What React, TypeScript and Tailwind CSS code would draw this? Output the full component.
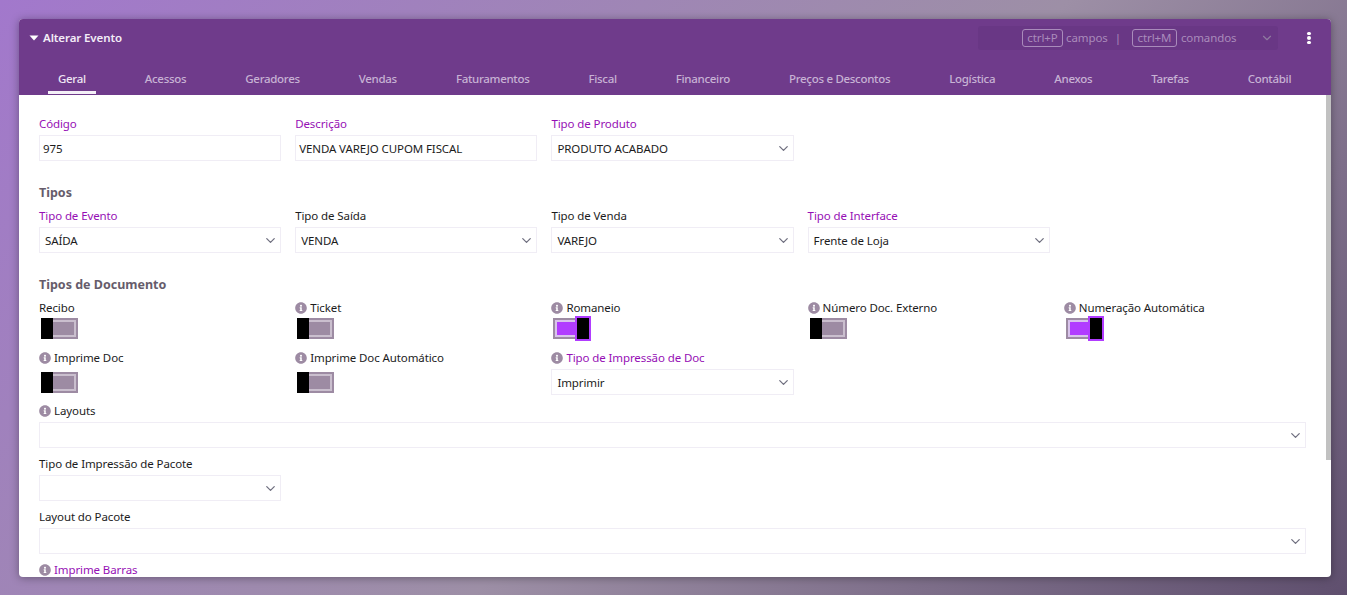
import { ChevronDown } from 'lucide-react'
import { FaInfoCircle } from 'react-icons/fa'

const tabs = ['Geral', 'Acessos', 'Geradores', 'Vendas', 'Faturamentos', 'Fiscal', 'Financeiro', 'Preços e Descontos', 'Logística', 'Anexos', 'Tarefas', 'Contábil']

function Label({ text, info, required }: { text: string; info?: boolean; required?: boolean }) {
  return (
    <div className={`flex h-[19px] items-center gap-[3px] pb-[4px] text-[11.5px] leading-none tracking-[-0.1px] whitespace-nowrap ${required ? 'text-[#960fb5]' : 'text-[#1c1c1c]'}`}>
      {info && <FaInfoCircle className="h-[12px] w-[12px] text-[#9d8ba3]" />}
      <span>{text}</span>
    </div>
  )
}

function Input({ value }: { value: string }) {
  return (
    <div className="flex h-[26px] items-center border border-[#f0edf5] bg-white px-[3px] pt-[1px] text-[11.5px] tracking-[-0.1px] text-[#1c1c1c]">
      {value}
    </div>
  )
}

function Select({ value = '' }: { value?: string }) {
  return (
    <div className="flex h-[26px] items-center justify-between border border-[#f0edf5] bg-white pt-[1px] pr-[2px] pl-[5px] text-[11.5px] tracking-[-0.1px] text-[#1c1c1c]">
      <span>{value}</span>
      <ChevronDown size={15} strokeWidth={2} className="mt-[-1px] text-[#6f6f7f]" />
    </div>
  )
}

function Toggle({ on }: { on?: boolean }) {
  if (on) {
    return (
      <div className="ml-[2px] flex h-[25px] w-[38px] items-center">
        <div className="h-[21px] w-[22px] border-y-2 border-l-2 border-[#9d8ba3]">
          <div className="h-full w-full border-y-2 border-l-2 border-[#d9c4ec] bg-[#b13cff]" />
        </div>
        <div className="h-[25px] w-[16px] border-2 border-[#b13cff] bg-black" />
      </div>
    )
  }
  return (
    <div className="ml-[2px] flex h-[21px] w-[37px]">
      <div className="h-full w-[12px] bg-black" />
      <div className="h-full flex-1 border-y-2 border-r-2 border-[#9d8ba3]">
        <div className="h-full w-full border-y-2 border-r-2 border-[#cabfce] bg-[#9d8ba3]" />
      </div>
    </div>
  )
}

function Heading({ text, className }: { text: string; className: string }) {
  return <div className={`flex h-[20px] items-center text-[12.5px] font-bold text-[#665c6b] ${className}`}>{text}</div>
}

export default function App() {
  return (
    <div
      className="h-[595px] w-[1347px] overflow-hidden bg-[linear-gradient(135deg,#a278cc_0%,#9d8fa6_55%,#5f4f6e_100%)] p-[19px] pr-[16px] pb-[18px]"
      style={{ fontFamily: '"Noto Sans", "Open Sans", sans-serif' }}
    >
      <div className="flex h-[558px] w-[1312px] flex-col overflow-hidden rounded-[4px] bg-white shadow-[0_1px_8px_rgba(0,0,0,0.35)]">
        <header className="h-[76px] shrink-0 bg-[#6f3b8b]">
          <div className="flex h-[37px] items-center pt-[1px] pl-[10px]">
            <svg width="10" height="6" viewBox="0 0 10 6" className="mr-[4px] fill-white">
              <path d="M0.5 0.5h9L5 5.5z" />
            </svg>
            <span className="text-[11.5px] font-semibold tracking-[-0.1px] text-[#f3edf7]">Alterar Evento</span>
            <div className="mt-[-1px] ml-auto flex h-[24px] w-[300px] items-center rounded-[3px] bg-[#693785] pl-[44px] text-[11.5px] tracking-[-0.1px] text-[#a98bbb]">
              <span className="flex h-[18px] w-[41px] items-center justify-center rounded-[3px] border border-[#a98bbb]">ctrl+P</span>
              <span className="ml-[3px]">campos</span>
              <span className="ml-[7px]">|</span>
              <span className="ml-[11px] flex h-[18px] w-[45px] items-center justify-center rounded-[3px] border border-[#a98bbb]">ctrl+M</span>
              <span className="ml-[4px]">comandos</span>
              <ChevronDown size={14} strokeWidth={2} className="ml-[24px] text-[#8f7aa0]" />
            </div>
            <div className="mr-[20px] ml-[29px] flex w-[4px] flex-col gap-[1px]">
              <div className="h-[3.5px] w-[4px] rounded-full bg-white" />
              <div className="h-[3.5px] w-[4px] rounded-full bg-white" />
              <div className="h-[3.5px] w-[4px] rounded-full bg-white" />
            </div>
          </div>
          <nav className="flex h-[38px] gap-[39px] pl-[29px] text-[11.5px] font-medium tracking-[-0.3px] text-[#c7b2d4]">
            {tabs.map((t, i) => (
              <div
                key={t}
                className={`flex h-[38px] items-center border-b-[3px] px-[10px] pt-[11px] whitespace-nowrap ${i === 0 ? 'border-[#f4f0f7] text-[#eee6f3]' : 'border-transparent'}`}
              >
                {t}
              </div>
            ))}
          </nav>
        </header>

        <div className="flex min-h-0 flex-1">
          <main className="min-w-0 flex-1 overflow-hidden pt-[21px] pr-[20px] pl-[20px]">
            <div className="grid grid-cols-5 gap-x-[14px]">
              <div>
                <Label text="Código" required />
                <Input value="975" />
              </div>
              <div>
                <Label text="Descrição" required />
                <Input value="VENDA VAREJO CUPOM FISCAL" />
              </div>
              <div>
                <Label text="Tipo de Produto" required />
                <Select value="PRODUTO ACABADO" />
              </div>
            </div>

            <Heading text="Tipos" className="mt-[22px] mb-[5px]" />
            <div className="grid grid-cols-5 gap-x-[14px]">
              <div>
                <Label text="Tipo de Evento" required />
                <Select value="SAÍDA" />
              </div>
              <div>
                <Label text="Tipo de Saída" />
                <Select value="VENDA" />
              </div>
              <div>
                <Label text="Tipo de Venda" />
                <Select value="VAREJO" />
              </div>
              <div>
                <Label text="Tipo de Interface" required />
                <Select value="Frente de Loja" />
              </div>
            </div>

            <Heading text="Tipos de Documento" className="mt-[22px] mb-[5px]" />
            <div className="grid h-[49px] grid-cols-5 gap-x-[14px]">
              <div>
                <Label text="Recibo" />
                <div className="mt-[-1px]">
                  <Toggle />
                </div>
              </div>
              <div>
                <Label text="Ticket" info />
                <div className="mt-[-1px]">
                  <Toggle />
                </div>
              </div>
              <div>
                <Label text="Romaneio" info />
                <div className="mt-[-3px]">
                  <Toggle on />
                </div>
              </div>
              <div>
                <Label text="Número Doc. Externo" info />
                <div className="mt-[-1px]">
                  <Toggle />
                </div>
              </div>
              <div>
                <Label text="Numeração Automática" info />
                <div className="mt-[-3px]">
                  <Toggle on />
                </div>
              </div>
            </div>
            <div className="mt-[1px] grid grid-cols-5 gap-x-[14px]">
              <div>
                <Label text="Imprime Doc" info />
                <div className="mt-[3px]">
                  <Toggle />
                </div>
              </div>
              <div>
                <Label text="Imprime Doc Automático" info />
                <div className="mt-[3px]">
                  <Toggle />
                </div>
              </div>
              <div>
                <Label text="Tipo de Impressão de Doc" info required />
                <Select value="Imprimir" />
              </div>
            </div>

            <div className="mt-[8px]">
              <Label text="Layouts" info />
              <Select />
            </div>
            <div className="mt-[8px] grid grid-cols-5 gap-x-[14px]">
              <div>
                <Label text="Tipo de Impressão de Pacote" />
                <Select />
              </div>
            </div>
            <div className="mt-[8px]">
              <Label text="Layout do Pacote" />
              <Select />
            </div>
            <div className="mt-[8px]">
              <Label text="Imprime Barras" info required />
            </div>
          </main>
          <div className="w-[5px] shrink-0">
            <div className="h-[365px] bg-[#c1c1c1]" />
          </div>
        </div>
      </div>
    </div>
  )
}
